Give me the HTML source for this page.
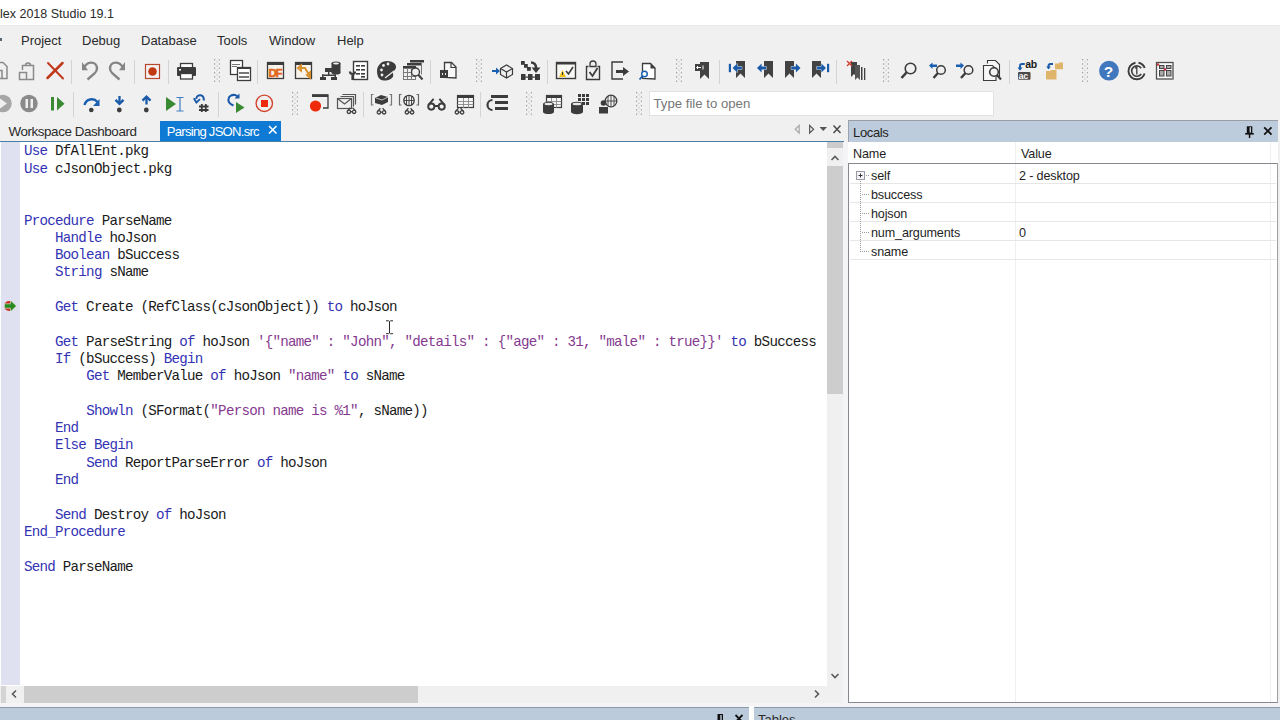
<!DOCTYPE html>
<html><head><meta charset="utf-8">
<style>
*{margin:0;padding:0;box-sizing:border-box}
html,body{width:1280px;height:720px;overflow:hidden;background:#f0f0f1;font-family:"Liberation Sans",sans-serif;color:#1e1e1e}
.a{position:absolute}
#title{left:0;top:0;width:1280px;height:25px;background:#fff}
#title span{position:absolute;left:0;top:6.5px;font-size:12.5px;color:#2a2a2a}
.menu{top:32.7px;font-size:13px;color:#2a2a2a}
#tabstrip{left:0;top:120px;width:845px;height:22px}
#tabline{left:0;top:141px;width:844px;height:1px;background:#4a7fa8}
#tab{left:160px;top:121px;width:121px;height:21px;background:#0e7ad3;color:#fff;font-size:12.3px}
#editor{left:0;top:142px;width:844px;height:560px;background:#fff}
#gutter{left:1px;top:142px;width:19px;height:543px;background:#dfe0f0}
#code{left:24px;top:143.4px;font-family:"Liberation Mono",monospace;font-size:14.2px;letter-spacing:-0.75px;line-height:17.3px;white-space:pre;color:#1a1a1a}
.k{color:#3333b4}
.s{color:#853a8f}
#vsb{left:827px;top:142px;width:16px;height:561px;background:#f0f0f0}
#hsb{left:0;top:685.5px;width:827px;height:17.5px;background:#f0f0f0}
#locals{left:848px;top:142px;width:430px;height:561px;background:#fff}
#lochead{left:848px;top:120px;width:430px;height:22px;background:#bdccdc;border-top:1px solid #999ea4;border-left:1px solid #9aa3ad}
#lochead span{position:absolute;left:4px;top:3.5px;font-size:13px;letter-spacing:-0.35px;color:#1e1e1e}
.lt{position:absolute;font-size:12.6px;letter-spacing:-0.15px;color:#1e1e1e}
.row{position:absolute;left:850px;width:427px;height:19px;border-bottom:1px solid #e6e6e6;font-size:12.5px}
#bottom1{left:0;top:707px;width:749px;height:13px;background:#bccbdb;border-top:1px solid #8e9aa6}
#bottom2{left:754px;top:707px;width:526px;height:13px;background:#bccbdb;border-top:1px solid #8e9aa6}
</style></head><body>
<div class="a" style="left:0;top:25px;width:1280px;height:1px;background:#eaeaea"></div>
<div id="title" class="a"><span>lex 2018 Studio 19.1</span></div>
<div class="a" style="left:0;top:37.5px;width:1.6px;height:3.5px;background:#5a6670"></div>
<div class="a menu" style="left:21px">Project</div>
<div class="a menu" style="left:82px">Debug</div>
<div class="a menu" style="left:141px">Database</div>
<div class="a menu" style="left:217px">Tools</div>
<div class="a menu" style="left:269px">Window</div>
<div class="a menu" style="left:337px">Help</div>

<svg class="a" style="left:0;top:0" width="1280" height="120" viewBox="0 0 1280 120">
<defs>
<g id="grip"><rect x="0" y="0" width="1.2" height="1.4" fill="#a0a0a2"/><rect x="4.8" y="0" width="1.2" height="1.4" fill="#a8a8aa"/><rect x="0" y="4.3" width="1.2" height="1.4" fill="#a0a0a2"/><rect x="4.8" y="4.3" width="1.2" height="1.4" fill="#a8a8aa"/><rect x="0" y="8.6" width="1.2" height="1.4" fill="#a0a0a2"/><rect x="4.8" y="8.6" width="1.2" height="1.4" fill="#a8a8aa"/><rect x="0" y="12.9" width="1.2" height="1.4" fill="#a0a0a2"/><rect x="4.8" y="12.9" width="1.2" height="1.4" fill="#a8a8aa"/><rect x="0" y="17.2" width="1.2" height="1.4" fill="#a0a0a2"/><rect x="4.8" y="17.2" width="1.2" height="1.4" fill="#a8a8aa"/><rect x="0" y="21.5" width="1.2" height="1.4" fill="#a0a0a2"/><rect x="4.8" y="21.5" width="1.2" height="1.4" fill="#a8a8aa"/><rect x="2.4" y="2.2" width="1.2" height="1.2" fill="#c4c4c6"/><rect x="2.4" y="6.5" width="1.2" height="1.2" fill="#c4c4c6"/><rect x="2.4" y="10.8" width="1.2" height="1.2" fill="#c4c4c6"/><rect x="2.4" y="15.100000000000001" width="1.2" height="1.2" fill="#c4c4c6"/><rect x="2.4" y="19.4" width="1.2" height="1.2" fill="#c4c4c6"/></g>
<g id="glasses" fill="none" stroke="#424242" stroke-width="1.3"><circle cx="1.9" cy="4.3" r="1.7"/><circle cx="7.1" cy="4.3" r="1.7"/><path d="M3.6 4.1h1.8M0.4 3.6l3-3.4M8.6 3.6l-3-3.4"/></g>
<g id="bmk" fill="#424242"><path d="M0 0h9v17l-4.5-4.5L0 17z"/></g>
</defs>
<!-- separators row1 -->
<g fill="#d4d4d6">
<rect x="71" y="60" width="1" height="24"/><rect x="134" y="60" width="1" height="24"/><rect x="168" y="60" width="1" height="24"/>
<rect x="257" y="60" width="1" height="24"/><rect x="430" y="60" width="1" height="24"/><rect x="547" y="60" width="1" height="24"/>
<rect x="719" y="60" width="1" height="24"/><rect x="836" y="60" width="1" height="24"/><rect x="1009" y="60" width="1" height="24"/>
<!-- row2 -->
<rect x="73" y="92" width="1" height="25"/><rect x="218" y="92" width="1" height="25"/><rect x="363" y="92" width="1" height="25"/><rect x="480" y="92" width="1" height="25"/>
</g>
<use href="#grip" x="214" y="59"/><use href="#grip" x="476" y="59"/><use href="#grip" x="676" y="59"/><use href="#grip" x="883" y="59"/><use href="#grip" x="1082" y="59"/>
<use href="#grip" x="292" y="92"/><use href="#grip" x="526" y="92"/><use href="#grip" x="636" y="92"/>

<!-- ROW 1 -->
<!-- copy partial -->
<g fill="none" stroke="#8a8a8a" stroke-width="1.5"><path d="M-2 62.5h5l4 4v12h-5"/><path d="M-2 70.5h4v8h-4"/></g>
<!-- bag -->
<g fill="none" stroke="#8a8a8a" stroke-width="1.5"><path d="M22.5 70v-4.5h11v14h-7"/><path d="M25.5 65.5a2.5 2.5 0 0 1 5 0"/><rect x="19.5" y="72.5" width="7" height="7"/></g>
<!-- red X -->
<g stroke="#c0391b" stroke-linecap="round"><path d="M47.5 78l15-15" stroke-width="2.5"/><path d="M48 63l15 15.5" stroke-width="2"/></g>
<!-- undo -->
<path d="M84.5 66.5C86.5 63.8 89 62.6 91.3 62.6 94.8 62.6 97 65.2 97 68.5 97 70.5 96 72 94.5 73.4L87.5 79.5" fill="none" stroke="#858585" stroke-width="2.4"/><path d="M82 62v8.2h6z" fill="#858585"/>
<!-- redo -->
<path d="M122.5 66.5C120.5 63.8 118 62.6 115.7 62.6 112.2 62.6 110 65.2 110 68.5 110 70.5 111 72 112.5 73.4L119.5 79.5" fill="none" stroke="#858585" stroke-width="2.4"/><path d="M125 62v8.2h-6z" fill="#858585"/>
<!-- record -->
<rect x="145.5" y="64.5" width="14" height="14" fill="#f6f2f2" stroke="#b34a2e" stroke-width="1.2"/><circle cx="152.5" cy="71.5" r="4.3" fill="#c23a14"/>
<!-- printer -->
<g><rect x="180.5" y="63.5" width="12" height="5" fill="#fff" stroke="#3c3c3c" stroke-width="1.3"/><rect x="177" y="67" width="19" height="9" rx="1" fill="#3c3c3c"/><rect x="180.5" y="73.5" width="12" height="5.5" fill="#fff" stroke="#3c3c3c" stroke-width="1.3"/><rect x="179" y="69" width="2" height="1.5" fill="#fff"/></g>
<!-- windows icon -->
<g fill="#fff" stroke="#3c3c3c" stroke-width="1.3"><rect x="230.5" y="60.5" width="12" height="14"/><rect x="237.5" y="67.5" width="13" height="13"/></g>
<rect x="237" y="67" width="14" height="2" fill="#3c3c3c"/><g fill="#777"><rect x="232" y="64" width="8" height="1"/><rect x="232" y="66" width="5" height="1"/><rect x="239" y="72" width="10" height="2"/><rect x="239" y="76" width="10" height="2"/></g>
<!-- DF -->
<rect x="267.5" y="62.5" width="16" height="16" fill="#f7f2ea" stroke="#3c3c3c" stroke-width="1.3"/><rect x="267" y="62" width="17" height="3" fill="#3c3c3c"/>
<text x="268.5" y="77" font-family="Liberation Sans" font-weight="bold" font-size="11.5" fill="#e0651a" letter-spacing="-1.2" stroke="#e0651a" stroke-width=".5">DF</text>
<!-- swap -->
<rect x="295.5" y="62.5" width="16" height="16" fill="#f7f2ea" stroke="#3c3c3c" stroke-width="1.3"/><rect x="295" y="62" width="17" height="3" fill="#3c3c3c"/>
<path d="M298 68l3-2.5v5zM301 68h4l3 5h2M307 75l3 2.5v-5z" fill="none" stroke="#d8902a" stroke-width="2"/>
<!-- hierarchy db -->
<g fill="#3c3c3c"><ellipse cx="336" cy="63.5" rx="4.5" ry="2"/><rect x="331.5" y="63.5" width="9" height="9"/><ellipse cx="336" cy="72.5" rx="4.5" ry="2"/><rect x="325" y="68" width="7" height="4"/><rect x="328" y="72" width="1.5" height="3"/><rect x="322" y="74.5" width="14" height="1.5"/><rect x="322" y="74.5" width="1.5" height="3"/><rect x="334.5" y="74.5" width="1.5" height="3"/><rect x="320" y="77" width="6" height="3"/><rect x="331" y="77" width="6" height="3"/></g>
<ellipse cx="336" cy="63.5" rx="3" ry="1" fill="#f0f0f2"/>
<!-- wrench list -->
<g><rect x="353.5" y="61.5" width="14" height="18" fill="#fff" stroke="#3c3c3c" stroke-width="1.4"/><g fill="#3c3c3c"><rect x="356" y="65" width="4" height="1.6"/><rect x="361" y="65" width="4" height="1.6"/><rect x="356" y="69" width="4" height="1.6"/><rect x="361" y="69" width="4" height="1.6"/><rect x="356" y="73" width="4" height="1.6"/><rect x="361" y="73" width="4" height="1.6"/><rect x="361" y="76" width="4" height="1.6"/></g><path d="M350 71.5a2.5 2.5 0 0 0 5 0M352.5 73v7" stroke="#3c3c3c" stroke-width="2.2" fill="none"/></g>
<!-- palette -->
<path d="M387 61c6 0 9.5 3 9 6.5-.5 3-3 3-3 5.5 0 2 1 3-1 5-2 2-5 2.5-8 2.5-5 0-7-4.5-7-9.5S381 61 387 61z" fill="#3c3c3c"/>
<g fill="#f0f0f2"><circle cx="381.5" cy="70" r="1.4"/><circle cx="383.5" cy="65.5" r="1.4"/><circle cx="388" cy="64" r="1.4"/><circle cx="382" cy="75" r="1.4"/></g><path d="M385 78l9-7" stroke="#f0f0f2" stroke-width="1.2"/>
<!-- table search -->
<g fill="#3c3c3c"><rect x="410" y="60" width="14" height="2.5"/><rect x="407" y="63" width="14" height="2.5"/><rect x="403" y="66" width="13" height="2.5"/></g>
<g fill="none" stroke="#7a7a7a" stroke-width="1"><rect x="403.5" y="68.5" width="12" height="11"/><path d="M403.5 72.5h12M403.5 76.5h12M407.5 68.5v11M411.5 68.5v11M421.5 62.5v12"/></g>
<circle cx="415.5" cy="72" r="4" fill="#f0f0f2" stroke="#3c3c3c" stroke-width="1.4"/><path d="M418.5 75l4 4.5" stroke="#3c3c3c" stroke-width="2"/>
<!-- doc box -->
<path d="M444.5 77.5v-15h7l4.5 4.5v11z" fill="#f7f7f7" stroke="#3c3c3c" stroke-width="1.3"/><path d="M451 62.5v5h5" fill="none" stroke="#3c3c3c" stroke-width="1.2"/><rect x="440" y="70" width="8" height="8" fill="#3c3c3c"/><rect x="442" y="73" width="1" height="2" fill="#eee"/><rect x="445" y="73" width="1" height="2" fill="#eee"/>
<!-- arrow cube -->
<path d="M492 71h5" stroke="#1a5fb0" stroke-width="2"/><path d="M496 67.5l4 3.5-4 3.5z" fill="#1a5fb0"/>
<g fill="none" stroke="#3c3c3c" stroke-width="1.2"><path d="M500.5 68.5l6-3.5 6 3.5v6l-6 3.5-6-3.5z"/><path d="M500.5 68.5l6 3.5 6-3.5M506.5 72v6"/></g>
<!-- boxes arrow -->
<g fill="#3a3a3a"><rect x="521" y="61" width="3.8" height="3.8"/><rect x="524" y="64" width="3.8" height="3.8"/><rect x="527" y="67" width="3.8" height="3.8"/><rect x="521" y="74" width="4.5" height="6"/><rect x="528" y="74" width="4.5" height="6"/><rect x="535" y="74" width="5" height="6"/><rect x="521" y="76.5" width="19" height="1.2"/></g>
<path d="M531 62.5c3 0 5 2 5 5v2" stroke="#3a3a3a" stroke-width="2.6" fill="none"/><path d="M531.5 67.5h9l-4.5 5.5z" fill="#3a3a3a"/>
<!-- warning window -->
<rect x="556.5" y="62.5" width="19" height="16" fill="#f7f7f4" stroke="#3c3c3c" stroke-width="1.4"/><rect x="556" y="62" width="20" height="2.5" fill="#3c3c3c"/>
<path d="M559 77l3.5-7 3.5 7z" fill="#f2c318"/><rect x="562" y="72" width="1" height="3" fill="#333"/>
<path d="M566 71l2.5 3 4.5-7" fill="none" stroke="#3c3c3c" stroke-width="1.6"/>
<!-- clipboard -->
<path d="M588.5 66.5h-2v13h13v-13h-2" fill="none" stroke="#3c3c3c" stroke-width="1.4"/><path d="M590 66.5h6v-2.5a3 3 0 0 0-6 0z" fill="none" stroke="#3c3c3c" stroke-width="1.3"/>
<path d="M589.5 72l3 4 5-8" fill="none" stroke="#3c3c3c" stroke-width="1.8"/>
<!-- exit -->
<path d="M623 62h-11v17h11" fill="none" stroke="#3c3c3c" stroke-width="1.4"/><path d="M616 70h7v-3l6 4.5-6 4.5v-3h-7z" fill="#3c3c3c"/>
<!-- doc search -->
<path d="M642.5 78.5v-15h8l4.5 4.5v11z" fill="#fff" stroke="#3c3c3c" stroke-width="1.3"/><path d="M650.5 63.5v5h5z" fill="#3c3c3c"/>
<circle cx="644.5" cy="74" r="2.8" fill="#fff" stroke="#1a5fb0" stroke-width="1.4"/><path d="M642.5 76l-3 3.5" stroke="#1a5fb0" stroke-width="1.8"/>
<!-- bookmark w box -->
<use href="#bmk" x="700" y="62"/><rect x="695" y="64" width="12" height="7" fill="#424242"/><path d="M697 67.5h4M703 65.5v4" stroke="#fff" stroke-width="1"/><path d="M698 66l-1.5 1.5 1.5 1.5" stroke="#fff" fill="none" stroke-width="1"/>
<!-- bookmark nav -->
<use href="#bmk" x="736" y="61"/><rect x="728.8" y="63.8" width="2.2" height="8.4" fill="#1a5aa8"/><path d="M732.6 68l4.6-4.4v2.9h4.6v3h-4.6v2.9z" fill="#1a5aa8" stroke="#f0f0f1" stroke-width=".9" paint-order="stroke"/>
<use href="#bmk" x="764" y="61"/><path d="M757 68l4.6-4.4v2.9h4.6v3h-4.6v2.9z" fill="#1a5aa8" stroke="#f0f0f1" stroke-width=".9" paint-order="stroke"/>
<use href="#bmk" x="785" y="61"/><path d="M800.5 68l-4.6-4.4v2.9h-4.6v3h4.6v2.9z" fill="#1a5aa8" stroke="#f0f0f1" stroke-width=".9" paint-order="stroke"/>
<use href="#bmk" x="812" y="61"/><path d="M826 68l-4.6-4.4v2.9h-4.6v3h4.6v2.9z" fill="#1a5aa8" stroke="#f0f0f1" stroke-width=".9" paint-order="stroke"/><rect x="827" y="63.8" width="2.2" height="8.4" fill="#1a5aa8"/>
<!-- x bookmarks -->
<g fill="#424242"><path d="M851 62h6v15l-3-3-3 3z"/><path d="M855 65h5v15l-2.5-2.5-2.5 2.5z" fill="#555"/><rect x="861" y="67" width="1.5" height="13"/><rect x="864" y="68" width="1.3" height="12"/></g>
<path d="M847 61l5 5M852 61l-5 5" stroke="#d04030" stroke-width="1.4"/>
<!-- magnifiers -->
<circle cx="910.5" cy="68.5" r="5.3" fill="none" stroke="#3c3c3c" stroke-width="1.6"/><path d="M906.5 72.5l-5 5.5" stroke="#3c3c3c" stroke-width="2.6"/>
<circle cx="941" cy="70" r="4.3" fill="none" stroke="#3c3c3c" stroke-width="1.5"/><path d="M938 73l-4.5 5" stroke="#3c3c3c" stroke-width="2.4"/><path d="M929 65.5l3.5-3v2h4.5v2.5h-4.5v2z" fill="#1a5fb0"/>
<circle cx="968.5" cy="70" r="4.3" fill="none" stroke="#3c3c3c" stroke-width="1.5"/><path d="M965.5 73l-4.5 5" stroke="#3c3c3c" stroke-width="2.4"/><path d="M964 65.5l-3.5-3v2h-4.5v2.5h4.5v2z" fill="#1a5fb0"/>
<!-- doc magnifier -->
<g fill="#f7f7f7" stroke="#3c3c3c" stroke-width="1.1"><path d="M987.5 63.5v-3h8l4 4v12h-3"/><path d="M983.5 80.5v-15h9l3.5 3.5v11.5z"/></g>
<circle cx="994" cy="72" r="4.3" fill="#f3f3f3" stroke="#3c3c3c" stroke-width="1.6"/><path d="M997 75l4 4.5" stroke="#3c3c3c" stroke-width="2.2"/>
<!-- ab ac -->
<text x="1025.3" y="68.2" font-family="Liberation Sans" font-weight="bold" font-size="10.5" fill="#1a1a1a" letter-spacing="-.3">ab</text>
<rect x="1018" y="72" width="12.5" height="7.8" rx="1" fill="#4a4a4a"/><text x="1018.6" y="78.8" font-family="Liberation Sans" font-weight="bold" font-size="9" fill="#fafafa" letter-spacing="-.3">ac</text>
<path d="M1024.8 64h-2.8c-1.3 0-2 .8-2 2v3" fill="none" stroke="#1a5aa8" stroke-width="1.9"/><path d="M1017.5 67.5h5l-2.5 3.2z" fill="#1a5aa8"/>
<!-- folders -->
<path d="M1055 63.5h3.5l1 -1h3.5v6.8h-8z" fill="#dfb56c"/><path d="M1046 71h4l1-1h5.5v9.5h-10.5z" fill="#dfb56c"/>
<path d="M1053 64h-2.5c-1.2 0-2 .8-2 2v1.5" fill="none" stroke="#1a5aa8" stroke-width="1.9"/><path d="M1046.3 66.5h4.5l-2.3 3z" fill="#1a5aa8"/>
<!-- help -->
<circle cx="1109" cy="70.7" r="9.9" fill="#4077bd"/><text x="1103.8" y="76.8" font-family="Liberation Sans" font-weight="bold" font-size="15.5" fill="#fff">?</text>
<!-- circle 1 -->
<path d="M1135.5 62.8A8.3 8.3 0 0 0 1137 79.3 8.3 8.3 0 0 0 1144.6 73.5" fill="none" stroke="#3c3c3c" stroke-width="1.9"/><path d="M1138.5 62.8A8.3 8.3 0 0 1 1144.7 68" fill="none" stroke="#3c3c3c" stroke-width="1.9"/>
<path d="M1141.2 68.2A5.2 5.2 0 1 0 1141.2 74" fill="none" stroke="#3c3c3c" stroke-width="1.6"/><path d="M1135 68.3l1.8-1.2v7.5" fill="none" stroke="#3c3c3c" stroke-width="1.3"/>
<!-- grid red dots -->
<rect x="1156.5" y="62.5" width="16.5" height="16.5" fill="#fafafa" stroke="#505050" stroke-width="1.3"/><rect x="1157" y="78" width="16" height="1.6" fill="#888"/>
<g fill="#a8a8a8" stroke="#444" stroke-width="1"><rect x="1159.5" y="65.5" width="4.5" height="3"/><rect x="1166.5" y="65.5" width="4.5" height="3"/><rect x="1159.5" y="70.5" width="4.5" height="5.5"/><rect x="1166.5" y="70.5" width="4.5" height="5.5"/></g>
<circle cx="1158" cy="64.5" r="1.2" fill="#d03030"/><circle cx="1165" cy="69.5" r="1.3" fill="#c02040"/>
<!-- ROW 2 -->
<circle cx="3" cy="103.5" r="8.7" fill="#a6a6a6"/><path d="M0 98.5l7 5-7 5z" fill="#f0f0f2"/>
<circle cx="29" cy="103.5" r="8.7" fill="#8a8a8a"/><rect x="25.5" y="99" width="2.5" height="9" fill="#f0f0f2"/><rect x="30.5" y="99" width="2.5" height="9" fill="#f0f0f2"/>
<rect x="51" y="97" width="3" height="13.5" fill="#3a8a34"/><path d="M57 97l7.5 6.75L57 110.5z" fill="#3a8a34"/>
<!-- step over -->
<path d="M84.5 105a7.5 7.5 0 0 1 13-3" fill="none" stroke="#1a5fb0" stroke-width="2.4"/><path d="M99.5 99v7h-6.5z" fill="#1a5fb0"/><circle cx="91.3" cy="110" r="2.3" fill="#3c3c3c"/>
<!-- step into -->
<path d="M119.5 96v7.5" stroke="#1a5aa8" stroke-width="2.3"/><path d="M115.5 99.8l4 4 4-4" fill="none" stroke="#1a5aa8" stroke-width="2.4"/><circle cx="119.3" cy="110" r="2.4" fill="#3c3c3c"/>
<!-- step out -->
<path d="M146.5 104.5v-7.5" stroke="#1a5aa8" stroke-width="2.3"/><path d="M142.5 100.7l4-4 4 4" fill="none" stroke="#1a5aa8" stroke-width="2.4"/><circle cx="146.3" cy="110" r="2.4" fill="#3c3c3c"/>
<!-- run to cursor -->
<path d="M166 97l10 7-10 7z" fill="#3a8a34"/><path d="M176.5 97.5h7M176.5 111h7M180 97.5v13.5" stroke="#3f7cc0" stroke-width="1.2"/>
<!-- # -->
<path d="M203.5 100.5A3.8 3.8 0 1 0 196.2 99" fill="none" stroke="#1a5aa8" stroke-width="2"/><path d="M193.8 98.2l2.6 4.3 3.6-3.4" fill="none" stroke="#1a5aa8" stroke-width="1.9"/>
<g stroke="#3a3a3a" stroke-width="1.8"><path d="M201.8 104v8M205.8 104v8M199 106.5h9.5M199 110h9.5"/></g>
<!-- set next -->
<path d="M233.5 105.5C229.5 104 228 101.5 228.5 99 229 96 232 94.5 235 95 236.5 95.3 237.5 96 238.5 97.5" fill="none" stroke="#1a5aa8" stroke-width="2.1"/><path d="M234.5 98.5h5v-5z" fill="#1a5aa8"/><path d="M236 102l8.5 5.5-8.5 5.5z" fill="#3a8a34"/>
<!-- stop -->
<circle cx="264.3" cy="103.3" r="8.2" fill="none" stroke="#d2452e" stroke-width="1.4"/><rect x="261" y="100" width="7" height="7" fill="#ee2a0a"/>
<!-- red dot window -->
<path d="M312 95h16v13h-5" fill="none" stroke="#3c3c3c" stroke-width="1.3"/><rect x="312" y="94.5" width="16" height="2.5" fill="#3c3c3c"/><circle cx="315.5" cy="106" r="5.6" fill="#ee2a0a"/>
<!-- envelope -->
<g fill="none" stroke="#555" stroke-width="1.2"><path d="M342.5 94.5h13v10"/><path d="M340.5 96.5h13v10"/><rect x="337.5" y="98.5" width="14" height="10" fill="#f0f0f2"/><path d="M337.5 98.5l7 5.5 7-5.5"/></g><use href="#glasses" x="347" y="107.5"/>
<!-- brick -->
<path d="M373.5 94.5h-2v10.5h2M389.5 94.5h2v10.5h-2" fill="none" stroke="#777" stroke-width="1.2"/><path d="M375 98l6-3 7 2v5l-6 3-7-2z" fill="#3c3c3c"/><path d="M376 98l6 2 6-3" stroke="#f0f0f2" stroke-width=".7" fill="none"/><use href="#glasses" x="377" y="108"/>
<!-- globe -->
<path d="M401.5 94.5h-2v10.5h2M416.5 94.5h2v10.5h-2" fill="none" stroke="#666" stroke-width="1.2"/><circle cx="409" cy="100.5" r="5.2" fill="none" stroke="#3c3c3c" stroke-width="1.3"/><path d="M404 100.5h10M409 95.5v10M406.5 96v9M411.5 96v9" stroke="#3c3c3c" stroke-width=".9"/><use href="#glasses" x="405" y="108"/>
<!-- glasses big -->
<g fill="none" stroke="#3c3c3c" stroke-width="1.9"><circle cx="431.3" cy="106.6" r="3.1"/><circle cx="441.7" cy="106.6" r="3.1"/><path d="M434.3 106h4.4M428.4 105.2l5.2-6.4M444.6 105.2l-5.2-6.4"/></g>
<!-- table glasses -->
<rect x="457.5" y="95.5" width="16" height="12" fill="#f7f7f7" stroke="#3c3c3c" stroke-width="1.2"/><rect x="457" y="95" width="17" height="3" fill="#3c3c3c"/><path d="M457.5 101.5h16M457.5 104.5h16M463.5 98v10M468.5 98v10" stroke="#888" stroke-width=".9"/><use href="#glasses" x="455" y="108"/>
<!-- list icon -->
<g fill="#3c3c3c"><rect x="491" y="95" width="17" height="3"/><rect x="495" y="101" width="13" height="3"/><rect x="495" y="107" width="13" height="3"/></g><path d="M492.5 100a2.5 2.5 0 0 0 0 10" fill="none" stroke="#3c3c3c" stroke-width="2.2"/>
<!-- table db -->
<rect x="546.5" y="95.5" width="15" height="12" fill="#f7f7f7" stroke="#3c3c3c" stroke-width="1.2"/><rect x="546" y="95" width="16" height="3" fill="#3c3c3c"/><path d="M546.5 101.5h15M546.5 104.5h15M551.5 98v10M556.5 98v10" stroke="#888" stroke-width=".9"/>
<ellipse cx="548.5" cy="104" rx="5.5" ry="2.2" fill="#3c3c3c"/><rect x="543" y="104" width="11" height="8" fill="#3c3c3c"/><ellipse cx="548.5" cy="112" rx="5.5" ry="2" fill="#3c3c3c"/><ellipse cx="548.5" cy="104" rx="4" ry="1.2" fill="#e8e8e8"/>
<!-- db grid -->
<g fill="#3c3c3c"><rect x="578" y="94" width="3" height="3"/><rect x="582" y="94" width="3" height="3"/><rect x="586" y="94" width="3" height="3"/><rect x="578" y="98" width="3" height="3"/><rect x="582" y="98" width="3" height="3"/><rect x="586" y="98" width="3" height="3"/><rect x="582" y="102" width="3" height="3"/><rect x="586" y="102" width="3" height="3"/><ellipse cx="577" cy="104" rx="6" ry="2.3"/><rect x="571" y="104" width="12" height="8"/><ellipse cx="577" cy="112" rx="6" ry="2.2"/></g><ellipse cx="577" cy="104" rx="4.5" ry="1.2" fill="#e8e8e8"/>
<!-- person globe -->
<circle cx="611" cy="101" r="5.8" fill="none" stroke="#3c3c3c" stroke-width="1.3"/><path d="M605.5 101h11M611 95.5v11M608 96v10M614 96v10" stroke="#3c3c3c" stroke-width=".9"/><circle cx="603.5" cy="103" r="2.8" fill="#3c3c3c"/><rect x="599" y="107" width="9" height="6.5" fill="#3c3c3c"/>
</svg>
<div class="a" style="left:649px;top:91px;width:345px;height:24.5px;background:#fff;border:1px solid #e2e2e5"><span style="position:absolute;left:3.5px;top:3.6px;font-size:13.2px;color:#777">Type file to open</span></div>
<div id="tabstrip" class="a"></div>
<div class="a" style="left:8.5px;top:123.7px;font-size:13.4px;letter-spacing:-0.42px;color:#2a2a2a">Workspace Dashboard</div>
<div id="tab" class="a"><span style="position:absolute;left:6.8px;top:2.8px;font-size:13.1px;letter-spacing:-0.75px">Parsing JSON.src</span><svg style="position:absolute;left:0;top:0" width="121" height="21" viewBox="160 121 121 21"><path d="M269 126l7.5 7.5M276.5 126l-7.5 7.5" stroke="#fff" stroke-width="1.6"/></svg></div>
<div id="tabline" class="a"></div>

<div id="editor" class="a"></div>
<div id="gutter" class="a"></div>
<div id="code" class="a"><span class="k">Use</span> DfAllEnt.pkg
<span class="k">Use</span> cJsonObject.pkg


<span class="k">Procedure</span> ParseName
    <span class="k">Handle</span> hoJson
    <span class="k">Boolean</span> bSuccess
    <span class="k">String</span> sName

    <span class="k">Get</span> Create (RefClass(cJsonObject)) <span class="k">to</span> hoJson

    <span class="k">Get</span> ParseString <span class="k">of</span> hoJson <span class="s">'{"name" : "John", "details" : {"age" : 31, "male" : true}}'</span> <span class="k">to</span> bSuccess
    <span class="k">If</span> (bSuccess) <span class="k">Begin</span>
        <span class="k">Get</span> MemberValue <span class="k">of</span> hoJson <span class="s">"name"</span> <span class="k">to</span> sName

        <span class="k">Showln</span> (SFormat(<span class="s">"Person name is %1"</span>, sName))
    <span class="k">End</span>
    <span class="k">Else</span> <span class="k">Begin</span>
        <span class="k">Send</span> ReportParseError <span class="k">of</span> hoJson
    <span class="k">End</span>

    <span class="k">Send</span> Destroy <span class="k">of</span> hoJson
<span class="k">End_Procedure</span>

<span class="k">Send</span> ParseName</div>
<div id="vsb" class="a"></div>
<div class="a" style="left:827px;top:142px;width:16px;height:5.5px;background:#cdcbcb"></div>
<div class="a" style="left:827px;top:166px;width:16px;height:228px;background:#cdcdcd"></div>
<div id="hsb" class="a"></div>
<div class="a" style="left:1px;top:686px;width:5px;height:17px;background:#d4d4d4"></div>
<div class="a" style="left:24px;top:686px;width:394px;height:17px;background:#cdcdcd"></div>
<div class="a" style="left:843px;top:142px;width:5px;height:561px;background:#f4f4f6"></div>
<div class="a" style="left:0;top:703px;width:1280px;height:4px;background:#f4f4f6"></div>
<svg class="a" style="left:0;top:118px" width="848" height="590" viewBox="0 118 848 590">
<!-- tab strip icons -->
<path d="M799.2 125.5v7.5l-4-3.75z" fill="none" stroke="#a8a8a8" stroke-width="1.2"/>
<path d="M809.6 125.5v7.5l4-3.75z" fill="none" stroke="#5a5a5a" stroke-width="1.2"/>
<path d="M819.5 127h7.5l-3.75 4z" fill="#555"/>
<path d="M833.5 125.5l7 7.5M840.5 125.5l-7 7.5" stroke="#4a4a4a" stroke-width="1.5"/>
<!-- scroll arrows -->
<path d="M831.5 160l3.5-3.5 3.5 3.5" fill="none" stroke="#5a5a5a" stroke-width="1.6"/>
<path d="M831.5 674l3.5 3.5 3.5-3.5" fill="none" stroke="#5a5a5a" stroke-width="1.6"/>
<path d="M16 690.5l-3.5 3.5 3.5 3.5" fill="none" stroke="#5a5a5a" stroke-width="1.6"/>
<path d="M815 690.5l3.5 3.5-3.5 3.5" fill="none" stroke="#5a5a5a" stroke-width="1.6"/>
<!-- exec arrow -->
<circle cx="9" cy="306" r="4.9" fill="#c8321e"/>
<path d="M4.5 303.8h6v-3.6l6 5.8-6 5.8v-3.6h-6z" fill="#2a8a22" stroke="#f4f4f4" stroke-width=".6"/>
<!-- I-beam -->
<path d="M386 320.8h2.5l1 .7 1-.7h2.5M389.5 321.5v11.5M386 333.7h2.5l1-.7 1 .7h2.5" fill="none" stroke="#2a2a2a" stroke-width="1"/>
</svg>
<div id="locals" class="a"></div>
<div id="lochead" class="a"><span>Locals</span>
<svg style="position:absolute;left:394px;top:4px" width="34" height="14" viewBox="0 0 34 14"><rect x="3.8" y="1.3" width="5.5" height="7" fill="#111"/><rect x="6.6" y="2.2" width="1.4" height="5.4" fill="#bdccdc"/><rect x="2.2" y="8" width="8.6" height="1.6" fill="#111"/><rect x="5.8" y="9" width="1.5" height="4" fill="#111"/><path d="M21.2 2.3l7.3 7.3M28.5 2.3l-7.3 7.3" stroke="#111" stroke-width="1.8"/></svg></div>
<div class="a" style="left:1015px;top:142px;width:1px;height:560px;background:#efefef"></div>
<div class="a" style="left:1270px;top:142px;width:1px;height:560px;background:#efefef"></div>
<div class="lt" style="left:853px;top:147px">Name</div>
<div class="lt" style="left:1021px;top:147px">Value</div>
<div class="a" style="left:848px;top:163px;width:430px;height:540px;border:1px solid #868a90;border-right-color:#a0a0a0"></div>
<div class="a" style="left:850px;top:183px;width:426px;height:1px;background:#e6e6e6"></div>
<div class="a" style="left:850px;top:202px;width:426px;height:1px;background:#e6e6e6"></div>
<div class="a" style="left:850px;top:221px;width:426px;height:1px;background:#e6e6e6"></div>
<div class="a" style="left:850px;top:240px;width:426px;height:1px;background:#e6e6e6"></div>
<div class="a" style="left:850px;top:259px;width:426px;height:1px;background:#e6e6e6"></div>
<svg class="a" style="left:850px;top:164px" width="24" height="100" viewBox="0 0 24 100">
<rect x="6.5" y="7.5" width="8" height="8" fill="#f4f4fa" stroke="#9a9aa6" stroke-width="1"/><path d="M8.5 11.5h4M10.5 9.5v4" stroke="#333" stroke-width="1"/>
<g fill="#9a9a9a"><rect x="16" y="11" width="1" height="1"/><rect x="18" y="11" width="1" height="1"/>
<rect x="10" y="17" width="1" height="1"/><rect x="10" y="19" width="1" height="1"/><rect x="10" y="21" width="1" height="1"/><rect x="10" y="23" width="1" height="1"/><rect x="10" y="25" width="1" height="1"/><rect x="10" y="27" width="1" height="1"/><rect x="10" y="29" width="1" height="1"/><rect x="10" y="31" width="1" height="1"/><rect x="10" y="33" width="1" height="1"/><rect x="10" y="35" width="1" height="1"/><rect x="10" y="37" width="1" height="1"/><rect x="10" y="39" width="1" height="1"/><rect x="10" y="41" width="1" height="1"/><rect x="10" y="43" width="1" height="1"/><rect x="10" y="45" width="1" height="1"/><rect x="10" y="47" width="1" height="1"/><rect x="10" y="49" width="1" height="1"/><rect x="10" y="51" width="1" height="1"/><rect x="10" y="53" width="1" height="1"/><rect x="10" y="55" width="1" height="1"/><rect x="10" y="57" width="1" height="1"/><rect x="10" y="59" width="1" height="1"/><rect x="10" y="61" width="1" height="1"/><rect x="10" y="63" width="1" height="1"/><rect x="10" y="65" width="1" height="1"/><rect x="10" y="67" width="1" height="1"/><rect x="10" y="69" width="1" height="1"/><rect x="10" y="71" width="1" height="1"/><rect x="10" y="73" width="1" height="1"/><rect x="10" y="75" width="1" height="1"/><rect x="10" y="77" width="1" height="1"/><rect x="10" y="79" width="1" height="1"/><rect x="10" y="81" width="1" height="1"/><rect x="10" y="83" width="1" height="1"/><rect x="10" y="85" width="1" height="1"/><rect x="10" y="87" width="1" height="1"/>
<rect x="12" y="30" width="1" height="1"/><rect x="14" y="30" width="1" height="1"/><rect x="16" y="30" width="1" height="1"/><rect x="18" y="30" width="1" height="1"/>
<rect x="12" y="49" width="1" height="1"/><rect x="14" y="49" width="1" height="1"/><rect x="16" y="49" width="1" height="1"/><rect x="18" y="49" width="1" height="1"/>
<rect x="12" y="68" width="1" height="1"/><rect x="14" y="68" width="1" height="1"/><rect x="16" y="68" width="1" height="1"/><rect x="18" y="68" width="1" height="1"/>
<rect x="12" y="87" width="1" height="1"/><rect x="14" y="87" width="1" height="1"/><rect x="16" y="87" width="1" height="1"/><rect x="18" y="87" width="1" height="1"/></g>
</svg>
<div class="lt" style="left:871px;top:168.5px">self</div><div class="lt" style="left:1019px;top:168.5px">2 - desktop</div>
<div class="lt" style="left:871px;top:187.5px">bsuccess</div>
<div class="lt" style="left:871px;top:206.5px">hojson</div>
<div class="lt" style="left:871px;top:225.5px">num_arguments</div><div class="lt" style="left:1019px;top:225.5px">0</div>
<div class="lt" style="left:871px;top:244.5px">sname</div>
<div id="bottom1" class="a"></div>
<div class="a" style="left:749px;top:706px;width:5px;height:14px;background:#fff"></div>
<div id="bottom2" class="a"><span style="position:absolute;left:4px;top:4px;font-size:13px;color:#2a2a2a">Tables</span></div>
<svg class="a" style="left:700px;top:708px" width="60" height="12" viewBox="0 0 60 12"><rect x="17.5" y="6" width="5.5" height="7" fill="#111"/><rect x="20.3" y="7" width="1.4" height="6" fill="#bccbdb"/><path d="M35.5 7l7 7M42.5 7l-7 7" stroke="#111" stroke-width="1.8"/></svg>
</body></html>
